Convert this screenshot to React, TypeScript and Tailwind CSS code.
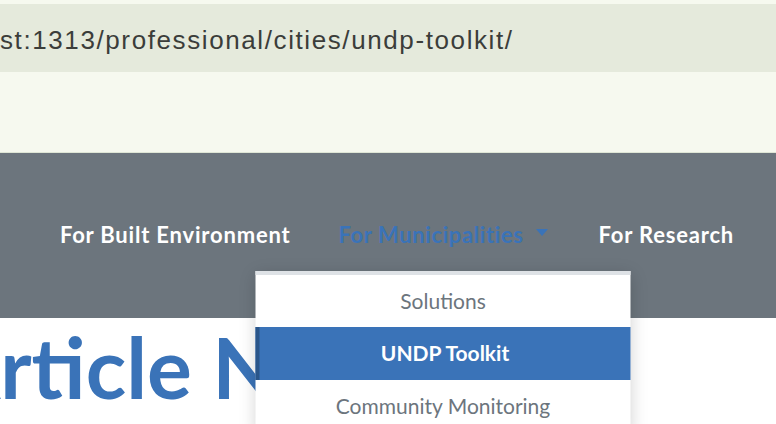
import { useState } from 'react';

const navItems = ['For Built Environment', 'For Municipalities', 'For Research'];
const subItems = ['Solutions', 'UNDP Toolkit', 'Community Monitoring'];

function Caret() {
  return (
    <svg width="12" height="7" viewBox="0 0 12 7" className="ml-[12px] mt-[-3px]">
      <path d="M0 0 L12 0 L6 7 Z" fill="#3a73b8" />
    </svg>
  );
}

export default function App() {
  const [active] = useState('UNDP Toolkit');

  return (
    <div className="w-[776px] h-[424px] overflow-hidden bg-white" style={{ fontFamily: 'Lato, "Noto Sans", sans-serif' }}>
      {/* browser chrome */}
      <div className="bg-[#f6f9ef] pt-[4px] h-[153px] border-b border-[#dfe6d6]">
        <div className="h-[68px] bg-[#e5eadc] flex items-center">
          <span
            className="text-[26px] text-[#3b3d3a] tracking-[1.6px] mt-[5px]"
            style={{ fontFamily: '"Liberation Sans", Arial, sans-serif' }}
          >
            st:1313/professional/cities/undp-toolkit/
          </span>
        </div>
      </div>

      {/* navbar */}
      <nav className="h-[165px] bg-[#6c757d] flex items-center justify-end pr-[42px] relative z-10">
        <ul className="flex items-center -mt-[3px]">
          {navItems.map((item, i) => {
            const open = item === 'For Municipalities';
            return (
              <li key={item} className={`relative flex items-center ${i === 1 ? 'ml-[48px] mr-[51px]' : ''}`}>
                <a
                  className={`text-[22px] font-bold ${open ? 'text-[#3a73b8] tracking-[0.6px]' : 'text-white tracking-[0.8px]'}`}
                >
                  {item}
                </a>
                {open && <Caret />}
                {open && (
                  <div className="absolute left-1/2 -translate-x-1/2 top-[53px] w-[375px] bg-white border-t-4 border-[#dee2e6] shadow-[0_4px_16px_rgba(0,0,0,0.18)]">
                    {subItems.map((s) => (
                      <div
                        key={s}
                        className={`flex items-center justify-center text-[21px] ${
                          s === active
                            ? 'bg-[#3a73b8] text-white font-bold border-l-4 border-[#2a568a] h-[53px]'
                            : 'text-[#6c757d] h-[52px]'
                        }`}
                      >
                        {s}
                      </div>
                    ))}
                  </div>
                )}
              </li>
            );
          })}
        </ul>
      </nav>

      {/* page content */}
      <main className="pt-[7px]">
        <h1 className="-ml-[58px] text-[84px] font-bold leading-none text-[#3a73b8] whitespace-nowrap">
          Article News
        </h1>
      </main>
    </div>
  );
}
